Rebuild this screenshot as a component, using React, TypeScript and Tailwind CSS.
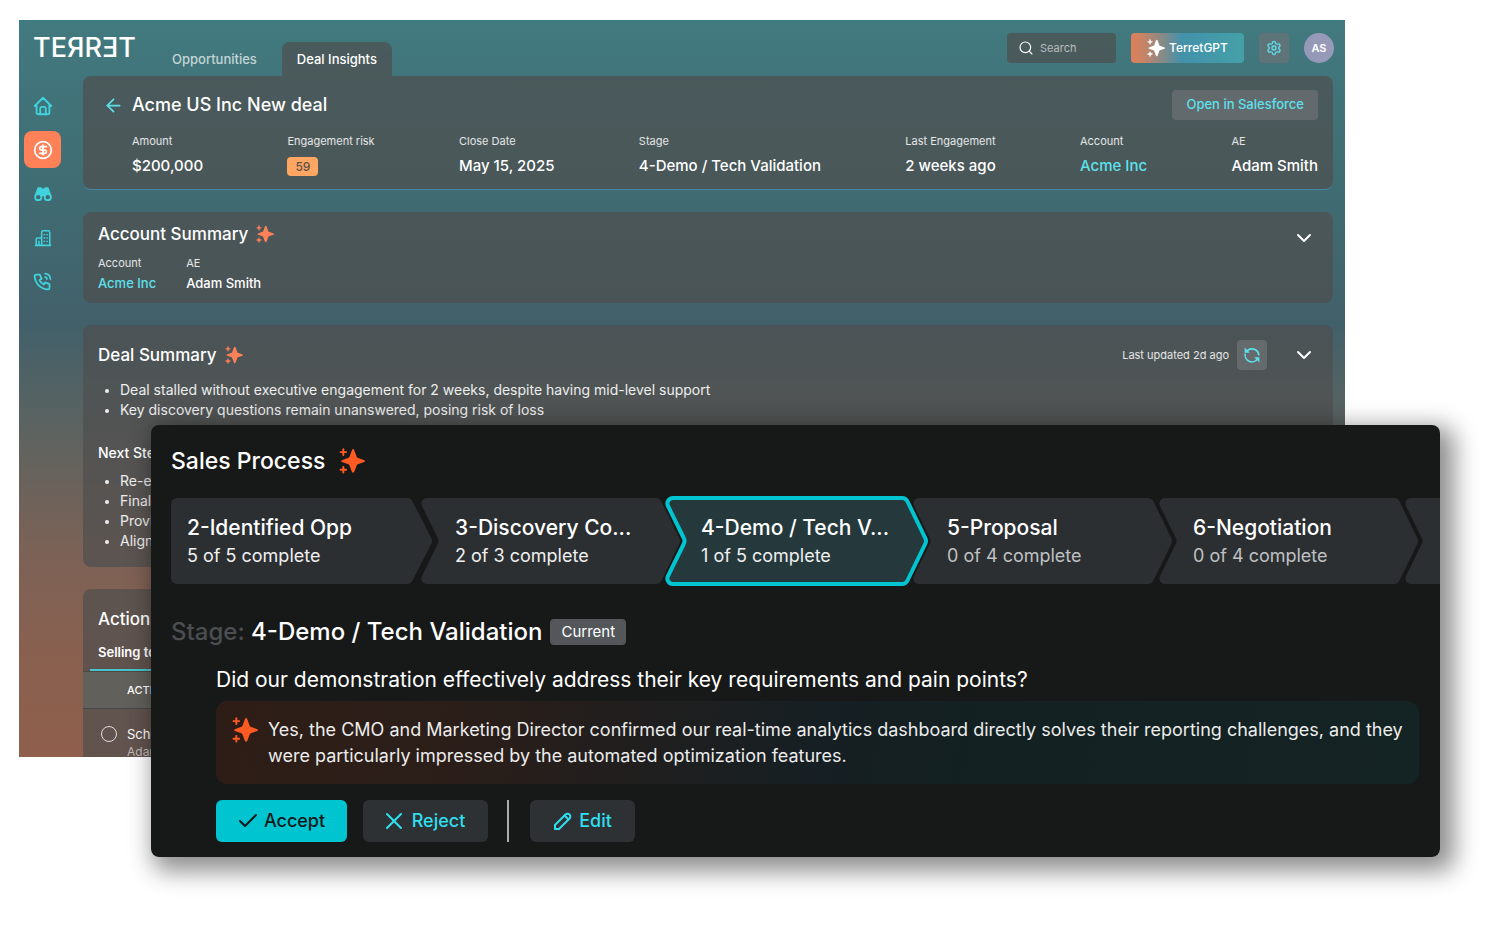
import { ReactNode } from 'react';
import { ArrowLeft, Check, ChevronDown, CircleDollarSign, Search, Settings, X } from 'lucide-react';
import { TbHome, TbPencil, TbPhoneCall } from 'react-icons/tb';

interface IconProps {
  className?: string;
}

function Sparkles({ className }: IconProps) {
  return (
    <svg viewBox="0 0 24 24" className={className} fill="currentColor" aria-hidden="true">
      <path d="M13 1c.5 0 .8.3 1 .8l2.400 6.400c.2.4.5.7.9.9l6 2.100c1 .4 1 1.300 0 1.700l-6 2.100c-.4.2-.7.5-.9.9L14 22.200c-.4 1-1.600 1-2 0l-2.400-6.300c-.2-.4-.5-.7-.9-.9l-6-2.100c-1-.4-1-1.300 0-1.700l6-2.100c.4-.2.7-.5.9-.9L12 1.800c.2-.5.5-.8 1-.8z" />
      <path
        d="M4 1.200v5.200M1.400 3.800h5.200M4 17.400v5.200M1.400 20h5.200"
        fill="none"
        stroke="currentColor"
        strokeWidth="1.800"
        strokeLinecap="round"
      />
    </svg>
  );
}

function BinocularsIcon({ className }: IconProps) {
  return (
    <svg viewBox="0 0 20 20" className={className} aria-hidden="true">
      <path
        d="M5 2.500h2.200c.9 0 1.500.6 1.600 1.500h2.400c.1-.9.7-1.500 1.600-1.500H15c.7 0 1.200.4 1.400 1l3 8.500-6 1-2.400-.5H9l-2.400.5-6-1 3-8.500c.2-.6.700-1 1.400-1z"
        fill="currentColor"
      />
      <circle cx="4.700" cy="13.500" r="4.400" fill="currentColor" />
      <circle cx="15.300" cy="13.500" r="4.400" fill="currentColor" />
      <circle cx="4.700" cy="13.500" r="2.400" fill="#42686f" />
      <circle cx="15.300" cy="13.500" r="2.400" fill="#42686f" />
    </svg>
  );
}

function BuildingsIcon({ className }: IconProps) {
  return (
    <svg viewBox="0 0 20 20" className={className} fill="none" stroke="currentColor" strokeWidth="1.700" aria-hidden="true">
      <path d="M1 18.200h18M8.500 18V3.500a1.500 1.500 0 0 1 1.500-1.500h6a1.500 1.500 0 0 1 1.500 1.500V18M2.500 18v-6.500A1.500 1.500 0 0 1 4 10h4.500M5.500 13v5" />
      <path d="M11.500 5.500v1.500M14.500 5.500v1.500M11.500 9.200v1.500M14.500 9.200v1.500M11.500 13v1.500M14.500 13v1.500" />
    </svg>
  );
}

function RefreshIcon({ className }: IconProps) {
  return (
    <svg viewBox="0 0 20 20" className={className} aria-hidden="true">
      <path
        d="M3.500 7A7.500 7.500 0 0 1 17.500 10.500M16.500 13.500A7.500 7.500 0 0 1 2.500 8.500"
        fill="none"
        stroke="currentColor"
        strokeWidth="1.800"
      />
      <path d="M1.800 1.800v5.700h5.700zM18.200 18.200v-5.700h-5.700z" fill="currentColor" />
    </svg>
  );
}

const navItems = [
  { label: 'Home', icon: <TbHome className="size-[22px]" /> },
  { label: 'Deals', icon: <CircleDollarSign className="size-5" />, active: true },
  { label: 'Discover', icon: <BinocularsIcon className="size-[18px]" /> },
  { label: 'Accounts', icon: <BuildingsIcon className="size-[18px]" /> },
  { label: 'Calls', icon: <TbPhoneCall className="size-[21px]" /> },
];

const steps = [
  { title: '2-Identified Opp', progress: '5 of 5 complete', status: 'done' },
  { title: '3-Discovery Co...', progress: '2 of 3 complete', status: 'done' },
  { title: '4-Demo / Tech V...', progress: '1 of 5 complete', status: 'current' },
  { title: '5-Proposal', progress: '0 of 4 complete', status: 'todo' },
  { title: '6-Negotiation', progress: '0 of 4 complete', status: 'todo' },
  { title: '', progress: '', status: 'todo' },
];

const FIRST_STEP =
  'M6 0H236a6 6 0 0 1 5.500 3.500L260 39.500q2 3.500 0 7L241.500 82.500a6 6 0 0 1-5.500 3.500H6a6 6 0 0 1-6-6V6a6 6 0 0 1 6-6z';
const STEP =
  'M6 0H235a6 6 0 0 1 5.500 3.500L258 39.500q2 3.500 0 7L240.500 82.500a6 6 0 0 1-5.500 3.500H6a5.500 5.500 0 0 1-5-8L16.500 46.500q2-3.500 0-7L1 8A5.500 5.500 0 0 1 6 0z';

function Card({ children, className = '' }: { children: ReactNode; className?: string }) {
  return <section className={`bg-[#4e4e4e]/70 px-[15px] ${className}`}>{children}</section>;
}

function Metric({ label, children }: { label: string; children: ReactNode }) {
  return (
    <div>
      <dt className="text-[11px] leading-4 text-white/85">{label}</dt>
      <dd className="mt-[7px] flex h-5 items-center text-[15px] font-medium">{children}</dd>
    </div>
  );
}

function Header() {
  return (
    <header className="flex h-14 justify-between pr-[11px] pl-[14px]">
      <div className="flex">
        <span className="w-[124px] pt-2 text-[27px] leading-10 font-medium">TEЯRƎT</span>
        <nav className="flex items-end text-[13px] font-medium">
          <a href="#opportunities" className="px-[15px] py-2 leading-[18px] text-white/70">
            Opportunities
          </a>
          <a href="#insights" className="ml-[10px] rounded-t-lg bg-[#4e4e4e]/70 px-[15px] py-2 leading-[18px]">
            Deal Insights
          </a>
        </nav>
      </div>
      <div className="flex items-center gap-[15px]">
        <label className="flex h-[30px] w-[109px] items-center gap-[6px] rounded bg-[#4e4e4e]/70 px-[11px]">
          <Search className="size-4 shrink-0" strokeWidth={1.75} />
          <input
            type="search"
            placeholder="Search"
            aria-label="Search"
            className="w-full min-w-0 bg-transparent text-[11px] placeholder:text-white/60 focus:outline-none"
          />
        </label>
        <button className="flex h-[30px] w-[113px] items-center justify-center gap-1 rounded bg-[linear-gradient(90deg,#e07f5b_0%,#c48468_12%,#4392ab_45%,#44a0a7_100%)] text-xs font-medium">
          <Sparkles className="size-[18px]" />
          TerretGPT
        </button>
        <button aria-label="Settings" className="flex size-[30px] items-center justify-center rounded bg-[#5f7479] text-[#5ce1ec]">
          <Settings className="size-4" />
        </button>
        <button className="size-[30px] rounded-full bg-[#9799b8] text-[11px] font-semibold">AS</button>
      </div>
    </header>
  );
}

function DealWindow() {
  return (
    <div className="max-h-[737px] overflow-hidden bg-[linear-gradient(180deg,#417a7f_0px,#406b72_180px,#42606a_305px,#5a6361_400px,#7b6256_530px,#8a604f_640px,#8f5f4c_737px)]">
      <Header />
      <div className="flex">
        <aside className="flex w-16 shrink-0 flex-col items-center gap-[7px] pt-[11px] pr-[17px]">
          {navItems.map((item) => (
            <button
              key={item.label}
              aria-label={item.label}
              className={
                item.active
                  ? 'flex size-[37px] items-center justify-center rounded-lg bg-[#ff8158] text-white'
                  : 'flex size-[37px] items-center justify-center text-[#40d3de]'
              }
            >
              {item.icon}
            </button>
          ))}
        </aside>

        <main className="flex min-w-0 grow flex-col gap-[22px] pr-3">
          <Card className="rounded-lg border-b border-[#4687a0] pt-[14px] pb-[13px]">
            <div className="flex items-center justify-between">
              <div className="flex items-center gap-2 pl-[5px]">
                <button aria-label="Back" className="text-[#5ce1ec]">
                  <ArrowLeft className="size-[21px]" />
                </button>
                <h1 className="text-lg font-medium">Acme US Inc New deal</h1>
              </div>
              <button className="h-[30px] rounded bg-[#626a6d] px-[14px] text-[13px] font-medium text-[#5ce1ec]">
                Open in Salesforce
              </button>
            </div>
            <dl className="mt-[13px] flex justify-between pl-[34px]">
              <Metric label="Amount">$200,000</Metric>
              <Metric label="Engagement risk">
                <span className="rounded-sm bg-[#ffa663] px-2 text-xs leading-[19px] text-[#5c5148]">59</span>
              </Metric>
              <Metric label="Close Date">May 15, 2025</Metric>
              <Metric label="Stage">4-Demo / Tech Validation</Metric>
              <Metric label="Last Engagement">2 weeks ago</Metric>
              <Metric label="Account">
                <a href="#acme" className="text-[#5ce1ec]">
                  Acme Inc
                </a>
              </Metric>
              <Metric label="AE">Adam Smith</Metric>
            </dl>
          </Card>

          <Card className="flex justify-between rounded-lg pt-[10px] pb-[10px]">
            <div>
              <h2 className="flex items-center gap-2 text-[17px] leading-6 font-medium">
                Account Summary
                <Sparkles className="size-[18px] text-[#ff8158]" />
              </h2>
              <dl className="mt-[9px] flex gap-[30px]">
                <div>
                  <dt className="text-[11px] leading-4 text-white/85">Account</dt>
                  <dd className="mt-[2px] text-[13px] leading-5 font-medium">
                    <a href="#acme" className="text-[#5ce1ec]">
                      Acme Inc
                    </a>
                  </dd>
                </div>
                <div>
                  <dt className="text-[11px] leading-4 text-white/85">AE</dt>
                  <dd className="mt-[2px] text-[13px] leading-5 font-medium">Adam Smith</dd>
                </div>
              </dl>
            </div>
            <button aria-label="Expand account summary" className="mt-1 mr-[2px] self-start">
              <ChevronDown className="size-6" />
            </button>
          </Card>

          <Card className="rounded-lg pt-[15px] pb-4">
            <div className="flex items-center justify-between">
              <h2 className="flex items-center gap-2 text-[17px] leading-6 font-medium">
                Deal Summary
                <Sparkles className="size-[18px] text-[#ff8158]" />
              </h2>
              <div className="flex items-center">
                <span className="text-[11px] text-white/85">Last updated 2d ago</span>
                <button aria-label="Refresh" className="ml-2 flex size-[30px] items-center justify-center rounded bg-[#656a6c] text-[#5ce1ec]">
                  <RefreshIcon className="size-[18px]" />
                </button>
                <button aria-label="Expand deal summary" className="mr-[2px] ml-[25px]">
                  <ChevronDown className="size-6" />
                </button>
              </div>
            </div>
            <ul className="mt-[10px] list-disc pl-[22px] text-sm leading-5 text-white/90 marker:text-xs">
              <li>Deal stalled without executive engagement for 2 weeks, despite having mid-level support</li>
              <li>Key discovery questions remain unanswered, posing risk of loss</li>
            </ul>
            <h3 className="mt-[23px] text-sm font-medium">Next Steps</h3>
            <ul className="mt-2 list-disc pl-[22px] text-sm leading-5 text-white/90 marker:text-xs">
              <li>Re-edit</li>
              <li>Finalize</li>
              <li>Provide</li>
              <li>Align</li>
            </ul>
          </Card>

          <Card className="rounded-t-lg pt-[18px]">
            <h2 className="text-[17px] leading-6 font-medium">Actions</h2>
            <div className="-mx-[15px] mt-2 border-b border-[#46403d]/60 pl-[7px]">
              <button className="w-40 border-b-2 border-[#45c6cc] pt-1 pb-2 pl-2 text-left text-[13px] leading-[18px] font-semibold">
                Selling to
              </button>
            </div>
            <div className="-mx-[15px]">
              <table className="w-full text-left">
                <thead className="bg-[#62605a]">
                  <tr className="h-[36px] border-b border-[#46484a]">
                    <th className="w-[44px]" />
                    <th className="text-[11px] font-medium">ACTION</th>
                  </tr>
                </thead>
                <tbody>
                  <tr>
                    <td className="pt-[17px] pl-[18px] align-top">
                      <input
                        type="checkbox"
                        aria-label="Schedule"
                        className="block size-4 appearance-none rounded-full border border-white/80"
                      />
                    </td>
                    <td className="pt-4 text-[13px] leading-[18px]">
                      Schedule
                      <div className="text-xs leading-[18px] text-white/60">Adam Smith</div>
                    </td>
                  </tr>
                </tbody>
              </table>
            </div>
          </Card>
        </main>
      </div>
    </div>
  );
}

function Step({ step, first }: { step: (typeof steps)[number]; first: boolean }) {
  const current = step.status === 'current';
  return (
    <li
      className={`relative h-[86px] shrink-0 ${first ? 'w-[263px] pl-4' : '-ml-[13px] w-[259px] pl-[34px]'} ${
        current ? 'z-10' : ''
      }`}
    >
      <svg className="absolute inset-0 size-full overflow-visible" aria-hidden="true">
        <path
          d={first ? FIRST_STEP : STEP}
          fill={current ? '#25393c' : '#2c2f32'}
          stroke={current ? '#00c4d0' : 'none'}
          strokeWidth="4"
        />
      </svg>
      <div className="relative pt-4">
        <div className="text-[21px] leading-7 font-medium">{step.title}</div>
        <div className={`text-lg leading-7 ${step.status === 'todo' ? 'text-[#bfc1c2]' : 'text-[#f0f0f0]'}`}>
          {step.progress}
        </div>
      </div>
    </li>
  );
}

function SalesProcess() {
  return (
    <section className="overflow-hidden rounded-lg bg-[#171918] pt-5 pb-[15px] pl-5">
      <h2 className="flex items-center gap-[14px] text-[23px] leading-8 font-medium">
        Sales Process
        <Sparkles className="size-[26px] text-[#ff5a22]" />
      </h2>
      <ol className="mt-[21px] flex">
        {steps.map((step, i) => (
          <Step key={i} step={step} first={i === 0} />
        ))}
      </ol>

      <div className="mt-8 flex items-center gap-2">
        <h3 className="text-2xl leading-8 font-medium">
          <span className="text-[#4b4e51]">Stage:</span> 4-Demo / Tech Validation
        </h3>
        <span className="rounded bg-[#54575a] px-[11px] text-[15px] leading-[26px]">Current</span>
      </div>

      <div className="mt-4 pr-[21px] pl-[45px]">
        <p className="text-[21px] leading-8">
          Did our demonstration effectively address their key requirements and pain points?
        </p>
        <div className="mt-[5px] flex gap-[10px] rounded-xl bg-[linear-gradient(100deg,#2e1d16_0%,#2b1e19_20%,#161f23_50%,#132122_65%,#142323_100%)] py-4 pr-[10px] pb-[15px] pl-4">
          <Sparkles className="size-[26px] shrink-0 text-[#ff5a22]" />
          <p className="text-lg leading-[26px] text-[#ececec]">
            Yes, the CMO and Marketing Director confirmed our real-time analytics dashboard directly solves their reporting
            challenges, and they were particularly impressed by the automated optimization features.
          </p>
        </div>
        <div className="mt-4 flex text-lg font-medium">
          <button className="flex h-[42px] w-[131px] items-center justify-center gap-1 rounded-md bg-[#00c4d0] pr-[2px] text-[#101818]">
            <Check className="size-6" />
            Accept
          </button>
          <button className="ml-4 flex h-[42px] w-[125px] items-center justify-center gap-1 rounded-md bg-[#2e3134] pr-[6px] text-[#2edfee]">
            <X className="size-7" strokeWidth={1.75} />
            Reject
          </button>
          <div className="mr-[21px] ml-[19px] w-[2px] bg-[#a9abad]" />
          <button className="flex h-[42px] w-[105px] items-center justify-center gap-1 rounded-md bg-[#2e3134] pr-[2px] text-[#2edfee]">
            <TbPencil className="size-6" />
            Edit
          </button>
        </div>
      </div>
    </section>
  );
}

export default function App() {
  return (
    <div className="relative min-h-screen overflow-hidden bg-white pt-5 pr-40 pb-24 pl-[19px] font-['Inter',sans-serif] text-white">
      <DealWindow />
      <div className="absolute top-[425px] right-[65px] left-[151px] rounded-lg shadow-[8px_8px_24px_6px_rgba(0,0,0,0.45)]">
        <SalesProcess />
      </div>
    </div>
  );
}
